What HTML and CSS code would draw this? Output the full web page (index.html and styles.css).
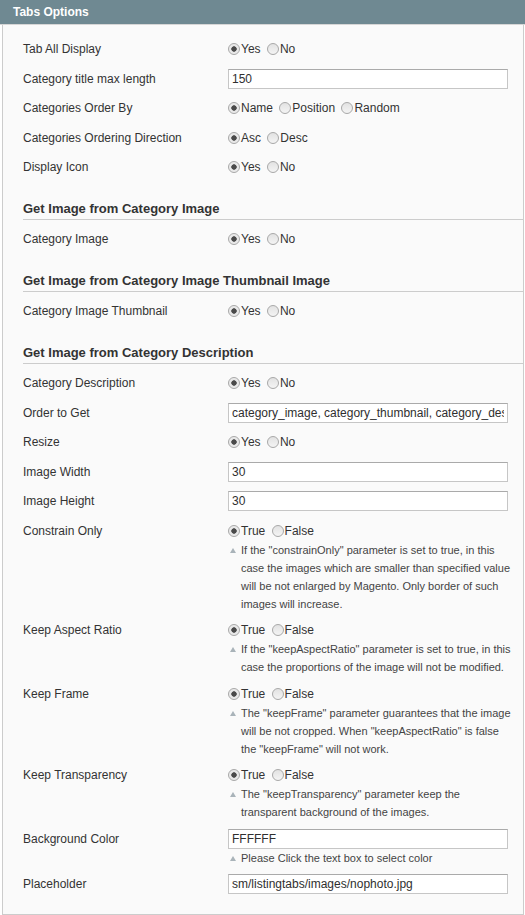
FILE: index.html
```html
<!DOCTYPE html>
<html lang="en">
<head>
    <meta charset="UTF-8">
    <meta name="viewport" content="width=device-width, initial-scale=1.0">
    <title>Tabs Options</title>
    <link rel="stylesheet" href="styles.css">
</head>
<body>
    <div class="panel">
        <div class="panel-head">Tabs Options</div>
        <div class="panel-body">

            <div class="row">
                <div class="label">Tab All Display</div>
                <div class="value">
                    <label class="radio"><input type="radio" name="tab_all" checked>Yes</label>
                    <label class="radio"><input type="radio" name="tab_all">No</label>
                </div>
            </div>
            <div class="row">
                <div class="label">Category title max length</div>
                <div class="value"><input type="text" class="input-text" value="150"></div>
            </div>
            <div class="row">
                <div class="label">Categories Order By</div>
                <div class="value">
                    <label class="radio"><input type="radio" name="order_by" checked>Name</label>
                    <label class="radio"><input type="radio" name="order_by">Position</label>
                    <label class="radio"><input type="radio" name="order_by">Random</label>
                </div>
            </div>
            <div class="row">
                <div class="label">Categories Ordering Direction</div>
                <div class="value">
                    <label class="radio"><input type="radio" name="order_dir" checked>Asc</label>
                    <label class="radio"><input type="radio" name="order_dir">Desc</label>
                </div>
            </div>
            <div class="row">
                <div class="label">Display Icon</div>
                <div class="value">
                    <label class="radio"><input type="radio" name="icon" checked>Yes</label>
                    <label class="radio"><input type="radio" name="icon">No</label>
                </div>
            </div>

            <h4 class="section-title">Get Image from Category Image</h4>
            <div class="row">
                <div class="label">Category Image</div>
                <div class="value">
                    <label class="radio"><input type="radio" name="cat_image" checked>Yes</label>
                    <label class="radio"><input type="radio" name="cat_image">No</label>
                </div>
            </div>

            <h4 class="section-title">Get Image from Category Image Thumbnail Image</h4>
            <div class="row">
                <div class="label">Category Image Thumbnail</div>
                <div class="value">
                    <label class="radio"><input type="radio" name="cat_thumb" checked>Yes</label>
                    <label class="radio"><input type="radio" name="cat_thumb">No</label>
                </div>
            </div>

            <h4 class="section-title">Get Image from Category Description</h4>
            <div class="row">
                <div class="label">Category Description</div>
                <div class="value">
                    <label class="radio"><input type="radio" name="cat_desc" checked>Yes</label>
                    <label class="radio"><input type="radio" name="cat_desc">No</label>
                </div>
            </div>
            <div class="row">
                <div class="label">Order to Get</div>
                <div class="value"><input type="text" class="input-text" value="category_image, category_thumbnail, category_description"></div>
            </div>
            <div class="row">
                <div class="label">Resize</div>
                <div class="value">
                    <label class="radio"><input type="radio" name="resize" checked>Yes</label>
                    <label class="radio"><input type="radio" name="resize">No</label>
                </div>
            </div>
            <div class="row">
                <div class="label">Image Width</div>
                <div class="value"><input type="text" class="input-text" value="30"></div>
            </div>
            <div class="row">
                <div class="label">Image Height</div>
                <div class="value"><input type="text" class="input-text" value="30"></div>
            </div>
            <div class="row">
                <div class="label">Constrain Only</div>
                <div class="value">
                    <label class="radio"><input type="radio" name="constrain" checked>True</label>
                    <label class="radio"><input type="radio" name="constrain">False</label>
                    <p class="note"><span class="arrow"></span><span>If the "constrainOnly" parameter is set to true, in this<br>case the images which are smaller than specified value<br>will be not enlarged by Magento. Only border of such<br>images will increase.</span></p>
                </div>
            </div>
            <div class="row">
                <div class="label">Keep Aspect Ratio</div>
                <div class="value">
                    <label class="radio"><input type="radio" name="aspect" checked>True</label>
                    <label class="radio"><input type="radio" name="aspect">False</label>
                    <p class="note"><span class="arrow"></span><span>If the "keepAspectRatio" parameter is set to true, in this<br>case the proportions of the image will not be modified.</span></p>
                </div>
            </div>
            <div class="row">
                <div class="label">Keep Frame</div>
                <div class="value">
                    <label class="radio"><input type="radio" name="frame" checked>True</label>
                    <label class="radio"><input type="radio" name="frame">False</label>
                    <p class="note"><span class="arrow"></span><span>The "keepFrame" parameter guarantees that the image<br>will be not cropped. When "keepAspectRatio" is false<br>the "keepFrame" will not work.</span></p>
                </div>
            </div>
            <div class="row">
                <div class="label">Keep Transparency</div>
                <div class="value">
                    <label class="radio"><input type="radio" name="transparency" checked>True</label>
                    <label class="radio"><input type="radio" name="transparency">False</label>
                    <p class="note"><span class="arrow"></span><span>The "keepTransparency" parameter keep the<br>transparent background of the images.</span></p>
                </div>
            </div>
            <div class="row">
                <div class="label">Background Color</div>
                <div class="value">
                    <input type="text" class="input-text" value="FFFFFF">
                    <p class="note"><span class="arrow"></span><span>Please Click the text box to select color</span></p>
                </div>
            </div>
            <div class="row">
                <div class="label">Placeholder</div>
                <div class="value"><input type="text" class="input-text" value="sm/listingtabs/images/nophoto.jpg"></div>
            </div>

        </div>
    </div>
</body>
</html>
```

FILE: styles.css
```css
body {
    margin: 0;
    font-family: "Liberation Sans", Arial, sans-serif;
    font-size: 12px;
    color: #333;
    background: #fff;
}

.panel {
    width: 525px;
}

.panel-head {
    height: 24px;
    line-height: 24px;
    padding-left: 13px;
    background-color: #6f8992;
    border-bottom: 1px solid #d6d6d6;
    color: #fff;
    font-weight: bold;
    font-size: 12px;
}

.panel-body {
    margin: 0 1px 0 2px;
    padding: 9px 0 15px 20px;
    background: #fafafa;
    border: 1px solid #cccccc;
    border-top: none;
}

.row {
    display: grid;
    grid-template-columns: 205px 280px;
    padding: 5px 0 4.5px;
}

.label {
    line-height: 20px;
    color: #333;
}

.value {
    min-height: 20px;
    line-height: 20px;
}

.radio {
    display: inline-flex;
    align-items: center;
    margin-right: 3px;
    color: #333;
    vertical-align: top;
    height: 20px;
}

.radio input {
    appearance: none;
    -webkit-appearance: none;
    width: 12px;
    height: 12px;
    margin: 0 1px 0 0;
    border: 1px solid #a8a8a8;
    border-radius: 50%;
    background: linear-gradient(#e2e2e2, #f4f4f4);
}

.radio input:checked {
    background: radial-gradient(circle, #4a4a4a 0, #4a4a4a 2.4px, #e6e6e6 3px, #f2f2f2 100%);
}

.input-text {
    box-sizing: border-box;
    display: block;
    width: 280px;
    height: 20px;
    margin: 0;
    padding: 0 3px;
    border: 1px solid #c6c6c6;
    border-top-color: #aaaaaa;
    background: #fff;
    font-family: "Liberation Sans", Arial, sans-serif;
    font-size: 12px;
    color: #2f2f2f;
    outline: none;
}

.note {
    display: flex;
    margin: 0 0 -2px;
    font-size: 11px;
    line-height: 18px;
    color: #444;
    white-space: nowrap;
}

.note .arrow {
    flex: none;
    width: 0;
    height: 0;
    margin: 7px 5px 0 2px;
    border-left: 3.5px solid transparent;
    border-right: 3.5px solid transparent;
    border-bottom: 5px solid #a9b3b9;
}

.section-title {
    margin: 19px 0 4.5px;
    padding-bottom: 2px;
    line-height: 16px;
    font-size: 13px;
    font-weight: bold;
    color: #333;
    border-bottom: 1px solid #cccccc;
}
```
